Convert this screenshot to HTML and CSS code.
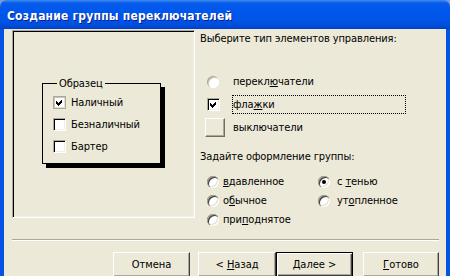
FILE: index.html
```html
<!DOCTYPE html>
<html lang="ru">
<head>
  <meta charset="UTF-8" />
  <title>Создание группы переключателей</title>
  <link rel="stylesheet" href="styles.css">
</head>
<body>
  <div class="window">
    <div class="titlebar">
      <span class="title">Создание группы переключателей</span>
    </div>

    <div class="client">
      <div class="main">
        <div class="sample">
          <fieldset class="group">
            <legend>Образец</legend>
            <div class="item">
              <span class="chk chk-pale"><svg width="7" height="7" viewBox="0 0 7 7"><polygon points="0,2 2,4 6,0 6,3 2,7 0,5" /></svg></span>
              Наличный
            </div>
            <div class="item"><span class="chk"></span>Безналичный</div>
            <div class="item"><span class="chk"></span>Бартер</div>
          </fieldset>
        </div>

        <div class="options">
          <div class="caption">Выберите тип элементов управления:</div>

          <div class="types">
            <div class="type">
              <span class="ctl"><span class="radio radio-pale"></span></span>
              <span class="lbl">перекл<u>ю</u>чатели</span>
            </div>
            <div class="type">
              <span class="ctl"><span class="chk"><svg width="7" height="7" viewBox="0 0 7 7"><polygon points="0,2 2,4 6,0 6,3 2,7 0,5" /></svg></span></span>
              <span class="lbl focus">фла<u>ж</u>ки</span>
            </div>
            <div class="type">
              <span class="ctl ctl-wide"><span class="toggle"></span></span>
              <span class="lbl">выключатели</span>
            </div>
          </div>

          <div class="caption caption-2">Задайте оформление группы:</div>

          <div class="styles">
            <div class="opt"><span class="radio"></span><span><u>в</u>давленное</span></div>
            <div class="opt opt-2"><span class="radio on"></span><span>с <u>т</u>енью</span></div>
            <div class="opt"><span class="radio"></span><span>о<u>б</u>ычное</span></div>
            <div class="opt opt-2"><span class="radio"></span><span>ут<u>о</u>пленное</span></div>
            <div class="opt"><span class="radio"></span><span>при<u>п</u>однятое</span></div>
          </div>
        </div>
      </div>

      <div class="separator"></div>

      <div class="buttons">
        <button class="btn">Отмена</button>
        <button class="btn btn-back">&lt; <u>Н</u>азад</button>
        <button class="btn btn-default"><u>Д</u>алее &gt;</button>
        <button class="btn btn-finish"><u>Г</u>отово</button>
      </div>
    </div>
  </div>
</body>
</html>
```

FILE: styles.css
```css
html, body {
  margin: 0;
  padding: 0;
}
body {
  width: 450px;
  height: 276px;
  background: #7a96df;
  font-family: "DejaVu Sans Condensed", "Liberation Sans", sans-serif;
  font-size: 11px;
  letter-spacing: -0.1px;
  color: #000;
  overflow: hidden;
}
u {
  text-decoration: underline;
  text-underline-offset: 1px;
}

.window {
  width: 450px;
  height: 276px;
  display: flex;
  flex-direction: column;
}

/* title bar */
.titlebar {
  height: 29px;
  flex: none;
  display: flex;
  align-items: center;
  padding-left: 7px;
  border-radius: 7px 7px 0 0;
  background: linear-gradient(#3d8cf7 0, #0a5ce8 3px, #0058ee 8px, #0055e8 20px, #0049d6 27px, #003fc2 29px);
}
.title {
  color: #fff;
  font-weight: bold;
  font-size: 12px;
  letter-spacing: 0.2px;
  text-shadow: 1px 1px 0 #0a1f8c;
  margin-top: 2px;
}

/* dialog body */
.client {
  flex: 1;
  display: flex;
  flex-direction: column;
  background: #ece9d8;
  border-left: 4px solid #0553e4;
  border-right: 4px solid #0553e4;
  border-bottom: 4px solid #0443c8;
}
.main {
  display: flex;
  padding-left: 8px;
}

.sample {
  width: 183px;
  height: 188px;
  box-sizing: border-box;
  margin-top: 1px;
  border: 1px solid;
  border-color: #aca899 #fff #fff #aca899;
  box-shadow: inset 1px 1px 0 #000, inset -1px -1px 0 #f1efe2;
  padding: 46px 0 0 29px;
}
.group {
  width: 119px;
  box-sizing: border-box;
  margin: 0;
  border: 1px solid #000;
  padding: 6px 10px 10px 10px;
  box-shadow: 4px 4px 0 #000;
  display: flex;
  flex-direction: column;
  gap: 9px;
}
.group legend {
  padding: 0 2px;
  margin-left: 4px;
}
.item {
  display: flex;
  align-items: center;
  gap: 5px;
  height: 13px;
}

/* classic 3d controls */
.chk {
  width: 13px;
  height: 13px;
  box-sizing: border-box;
  flex: none;
  background: #fff;
  border: 1px solid;
  border-color: #aca899 #fff #fff #aca899;
  box-shadow: inset 1px 1px 0 #000, inset -1px -1px 0 #f1efe2;
  display: flex;
  align-items: center;
  justify-content: center;
}
.chk-pale {
  border-color: #aca899;
  box-shadow: inset 1px 1px 0 #c8c5b4, inset -1px -1px 0 #e4e1d2;
}
.chk svg {
  display: block;
  shape-rendering: crispEdges;
}
.chk polygon {
  fill: #000;
}
.radio {
  width: 12px;
  height: 12px;
  flex: none;
  border-radius: 50%;
  background: #fff;
  box-shadow: inset 1px 1px 0 #aca899, inset 2px 2px 0 #404040, inset -1px -1px 0 #fff, inset -2px -2px 0 #e4e1d2;
  display: flex;
  align-items: center;
  justify-content: center;
}
.radio-pale {
  box-shadow: inset 1px 1px 0 #aca899, inset 2px 2px 0 #d6d3c6, inset -1px -1px 0 #fff;
}
.radio.on::after {
  content: "";
  width: 4px;
  height: 4px;
  border-radius: 50%;
  background: #000;
}
.toggle {
  width: 20px;
  height: 19px;
  box-sizing: border-box;
  background: #ece9d8;
  border: 1px solid;
  border-color: #fff #716f64 #716f64 #fff;
  box-shadow: inset -1px -1px 0 #aca899;
}

/* right column */
.options {
  flex: 1;
  padding: 3px 0 0 5px;
  display: flex;
  flex-direction: column;
}
.caption {
  height: 14px;
  line-height: 14px;
}
.types {
  margin-top: 24px;
  display: flex;
  flex-direction: column;
}
.type {
  height: 23px;
  display: flex;
  align-items: center;
}
.ctl {
  width: 32px;
  padding-left: 7px;
  box-sizing: border-box;
  display: flex;
  align-items: center;
}
.ctl-wide {
  padding-left: 5px;
}
.lbl {
  border: 1px dotted transparent;
  height: 17px;
  line-height: 17px;
  width: 172px;
}
.focus {
  border-color: #000;
}
.caption-2 {
  margin-top: 11px;
}
.styles {
  margin: 8px 0 0 7px;
  display: grid;
  grid-template-columns: 111px auto;
  grid-auto-rows: 19px;
}
.opt {
  display: flex;
  align-items: center;
  gap: 4px;
}
.opt-2 {
  gap: 7px;
}

/* bottom */
.separator {
  margin: 10px 7px 0 8px;
  height: 1px;
  background: #aca899;
  border-bottom: 1px solid #fff;
}
.buttons {
  margin-top: 11px;
  display: flex;
  justify-content: flex-end;
  padding-right: 7px;
}
.btn {
  width: 77px;
  height: 25px;
  margin: 0;
  padding: 0;
  font: inherit;
  color: #000;
  background: #ece9d8;
  border: 1px solid;
  border-color: #fff #404040 #404040 #fff;
  box-shadow: inset -1px -1px 0 #aca899;
}
.btn-back {
  margin-left: 8px;
  width: 78px;
}
.btn-default {
  border: 1px solid #000;
  box-shadow: inset 1px 1px 0 #fff, inset -1px -1px 0 #404040, inset -2px -2px 0 #aca899;
}
.btn-finish {
  margin-left: 10px;
  width: 76px;
}
```
